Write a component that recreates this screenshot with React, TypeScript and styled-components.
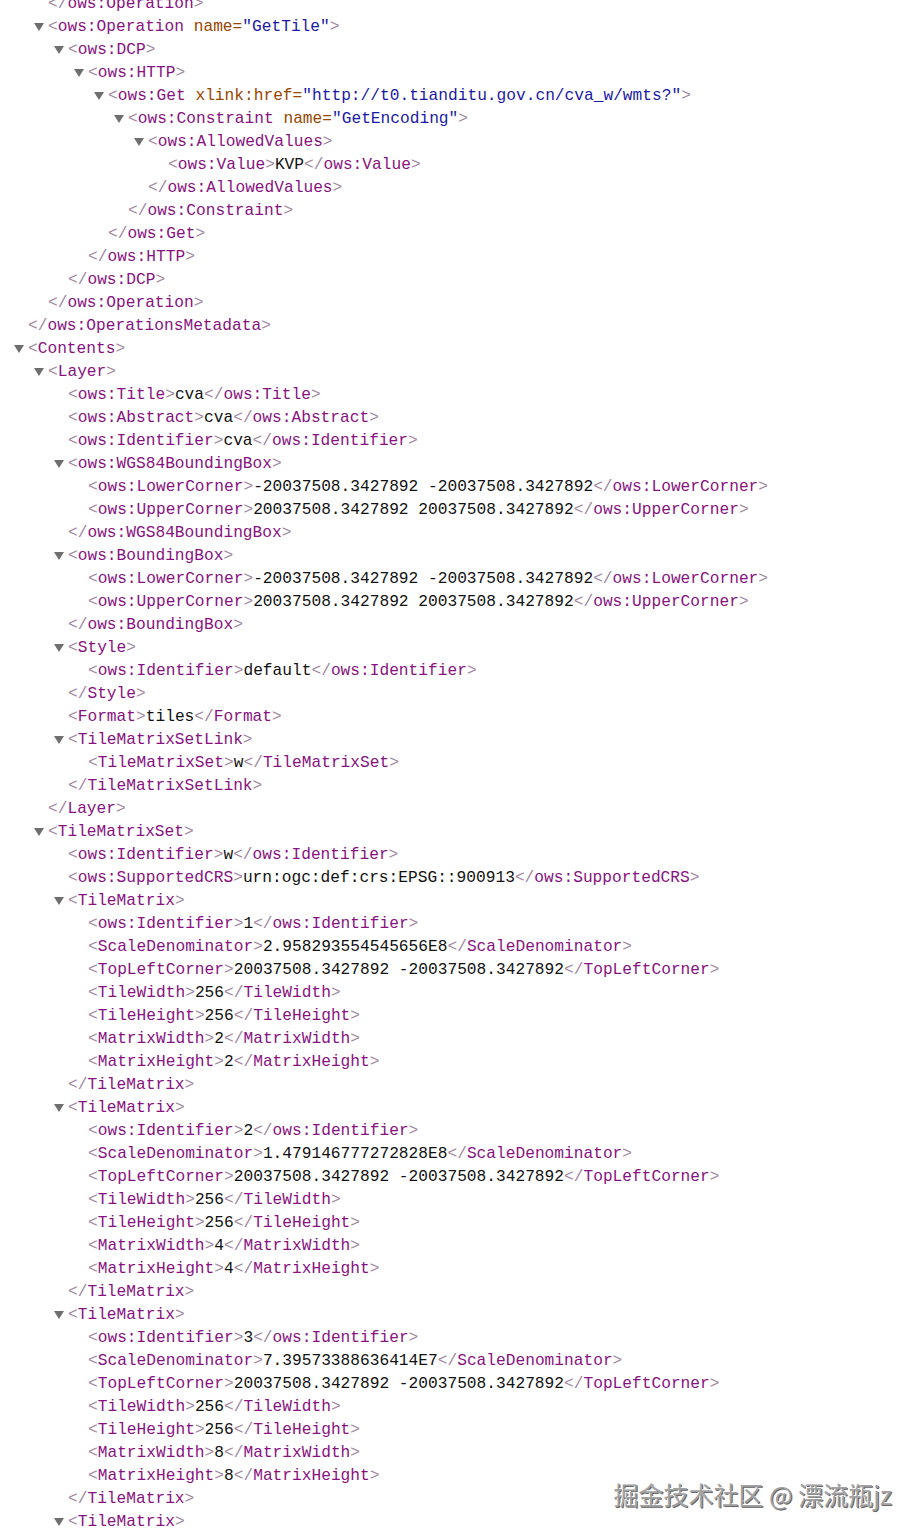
import React from "react";
import styled, { createGlobalStyle } from "styled-components";

const Global = createGlobalStyle`
  html, body { margin: 0; padding: 0; background: #ffffff; }
  body { overflow: hidden; }
`;

const Page = styled.div`
  position: relative;
  width: 921px;
  height: 1536px;
  overflow: hidden;
  background: #fff;
`;

const Tree = styled.div`
  display: flex;
  flex-direction: column;
  margin-top: -8px;
  font-family: "Liberation Mono", "DejaVu Sans Mono", monospace;
  font-size: 16.2px;
  color: #1a1a1a;
  white-space: pre;
`;

const Row = styled.div<{ $depth: number; $arrow: boolean }>`
  display: flex;
  align-items: center;
  height: 23px;
  padding-left: ${(p) => 28 + 20 * p.$depth - (p.$arrow ? 14 : 0)}px;
`;

const Arrow = styled.span`
  display: inline-block;
  width: 0;
  height: 0;
  border-left: 5px solid transparent;
  border-right: 5px solid transparent;
  border-top: 8px solid #6e6e6e;
  margin-right: 4px;
  margin-top: 1px;
`;

const Bracket = styled.span`
  color: #a086a0;
`;
const TagName = styled.span`
  color: #881280;
`;
const AttrName = styled.span`
  color: #994500;
`;
const AttrValue = styled.span`
  color: #1a1aa6;
`;
const Text = styled.span`
  color: #111;
`;

const Watermark = styled.div`
  position: absolute;
  right: 29px;
  top: 1476px;
  font-family: "Noto Sans CJK SC", "Noto Sans", sans-serif;
  font-size: 25px;
  font-weight: 400;
  color: #a2a2a2;
  text-shadow: -1px -1px 0 #ffffff, 1px 1px 0 #6a6a6a, 1px 1px 1px rgba(0, 0, 0, 0.25);
`;

type Line = [number, boolean, string];

const lines: Line[] = [
  [1, false, "</ows:Operation>"],
  [1, true, '<ows:Operation name="GetTile">'],
  [2, true, "<ows:DCP>"],
  [3, true, "<ows:HTTP>"],
  [4, true, '<ows:Get xlink:href="http://t0.tianditu.gov.cn/cva_w/wmts?">'],
  [5, true, '<ows:Constraint name="GetEncoding">'],
  [6, true, "<ows:AllowedValues>"],
  [7, false, "<ows:Value>KVP</ows:Value>"],
  [6, false, "</ows:AllowedValues>"],
  [5, false, "</ows:Constraint>"],
  [4, false, "</ows:Get>"],
  [3, false, "</ows:HTTP>"],
  [2, false, "</ows:DCP>"],
  [1, false, "</ows:Operation>"],
  [0, false, "</ows:OperationsMetadata>"],
  [0, true, "<Contents>"],
  [1, true, "<Layer>"],
  [2, false, "<ows:Title>cva</ows:Title>"],
  [2, false, "<ows:Abstract>cva</ows:Abstract>"],
  [2, false, "<ows:Identifier>cva</ows:Identifier>"],
  [2, true, "<ows:WGS84BoundingBox>"],
  [3, false, "<ows:LowerCorner>-20037508.3427892 -20037508.3427892</ows:LowerCorner>"],
  [3, false, "<ows:UpperCorner>20037508.3427892 20037508.3427892</ows:UpperCorner>"],
  [2, false, "</ows:WGS84BoundingBox>"],
  [2, true, "<ows:BoundingBox>"],
  [3, false, "<ows:LowerCorner>-20037508.3427892 -20037508.3427892</ows:LowerCorner>"],
  [3, false, "<ows:UpperCorner>20037508.3427892 20037508.3427892</ows:UpperCorner>"],
  [2, false, "</ows:BoundingBox>"],
  [2, true, "<Style>"],
  [3, false, "<ows:Identifier>default</ows:Identifier>"],
  [2, false, "</Style>"],
  [2, false, "<Format>tiles</Format>"],
  [2, true, "<TileMatrixSetLink>"],
  [3, false, "<TileMatrixSet>w</TileMatrixSet>"],
  [2, false, "</TileMatrixSetLink>"],
  [1, false, "</Layer>"],
  [1, true, "<TileMatrixSet>"],
  [2, false, "<ows:Identifier>w</ows:Identifier>"],
  [2, false, "<ows:SupportedCRS>urn:ogc:def:crs:EPSG::900913</ows:SupportedCRS>"],
];

const matrices: [string, string, string][] = [
  ["1", "2.958293554545656E8", "2"],
  ["2", "1.479146777272828E8", "4"],
  ["3", "7.39573388636414E7", "8"],
];

matrices.forEach(([id, scale, size]) => {
  lines.push([2, true, "<TileMatrix>"]);
  lines.push([3, false, `<ows:Identifier>${id}</ows:Identifier>`]);
  lines.push([3, false, `<ScaleDenominator>${scale}</ScaleDenominator>`]);
  lines.push([3, false, "<TopLeftCorner>20037508.3427892 -20037508.3427892</TopLeftCorner>"]);
  lines.push([3, false, "<TileWidth>256</TileWidth>"]);
  lines.push([3, false, "<TileHeight>256</TileHeight>"]);
  lines.push([3, false, `<MatrixWidth>${size}</MatrixWidth>`]);
  lines.push([3, false, `<MatrixHeight>${size}</MatrixHeight>`]);
  lines.push([2, false, "</TileMatrix>"]);
});
lines.push([2, true, "<TileMatrix>"]);

function renderXml(src: string): React.ReactNode[] {
  const out: React.ReactNode[] = [];
  const re = /<(\/?)([\w:]+)((?:\s+[\w:]+="[^"]*")*)\s*>|([^<]+)/g;
  let m: RegExpExecArray | null;
  let k = 0;
  while ((m = re.exec(src))) {
    if (m[4] !== undefined) {
      out.push(<Text key={k++}>{m[4]}</Text>);
      continue;
    }
    out.push(<Bracket key={k++}>{m[1] ? "</" : "<"}</Bracket>);
    out.push(<TagName key={k++}>{m[2]}</TagName>);
    const attrRe = /\s+([\w:]+)="([^"]*)"/g;
    let a: RegExpExecArray | null;
    while ((a = attrRe.exec(m[3] || ""))) {
      out.push(<AttrName key={k++}>{" " + a[1] + "="}</AttrName>);
      out.push(<AttrValue key={k++}>{'"' + a[2] + '"'}</AttrValue>);
    }
    out.push(<Bracket key={k++}>{">"}</Bracket>);
  }
  return out;
}

export default function App() {
  return (
    <Page>
      <Global />
      <Tree>
        {lines.map(([depth, arrow, src], i) => (
          <Row key={i} $depth={depth} $arrow={arrow}>
            {arrow && <Arrow />}
            {renderXml(src)}
          </Row>
        ))}
      </Tree>
      <Watermark>掘金技术社区 @ 漂流瓶jz</Watermark>
    </Page>
  );
}
